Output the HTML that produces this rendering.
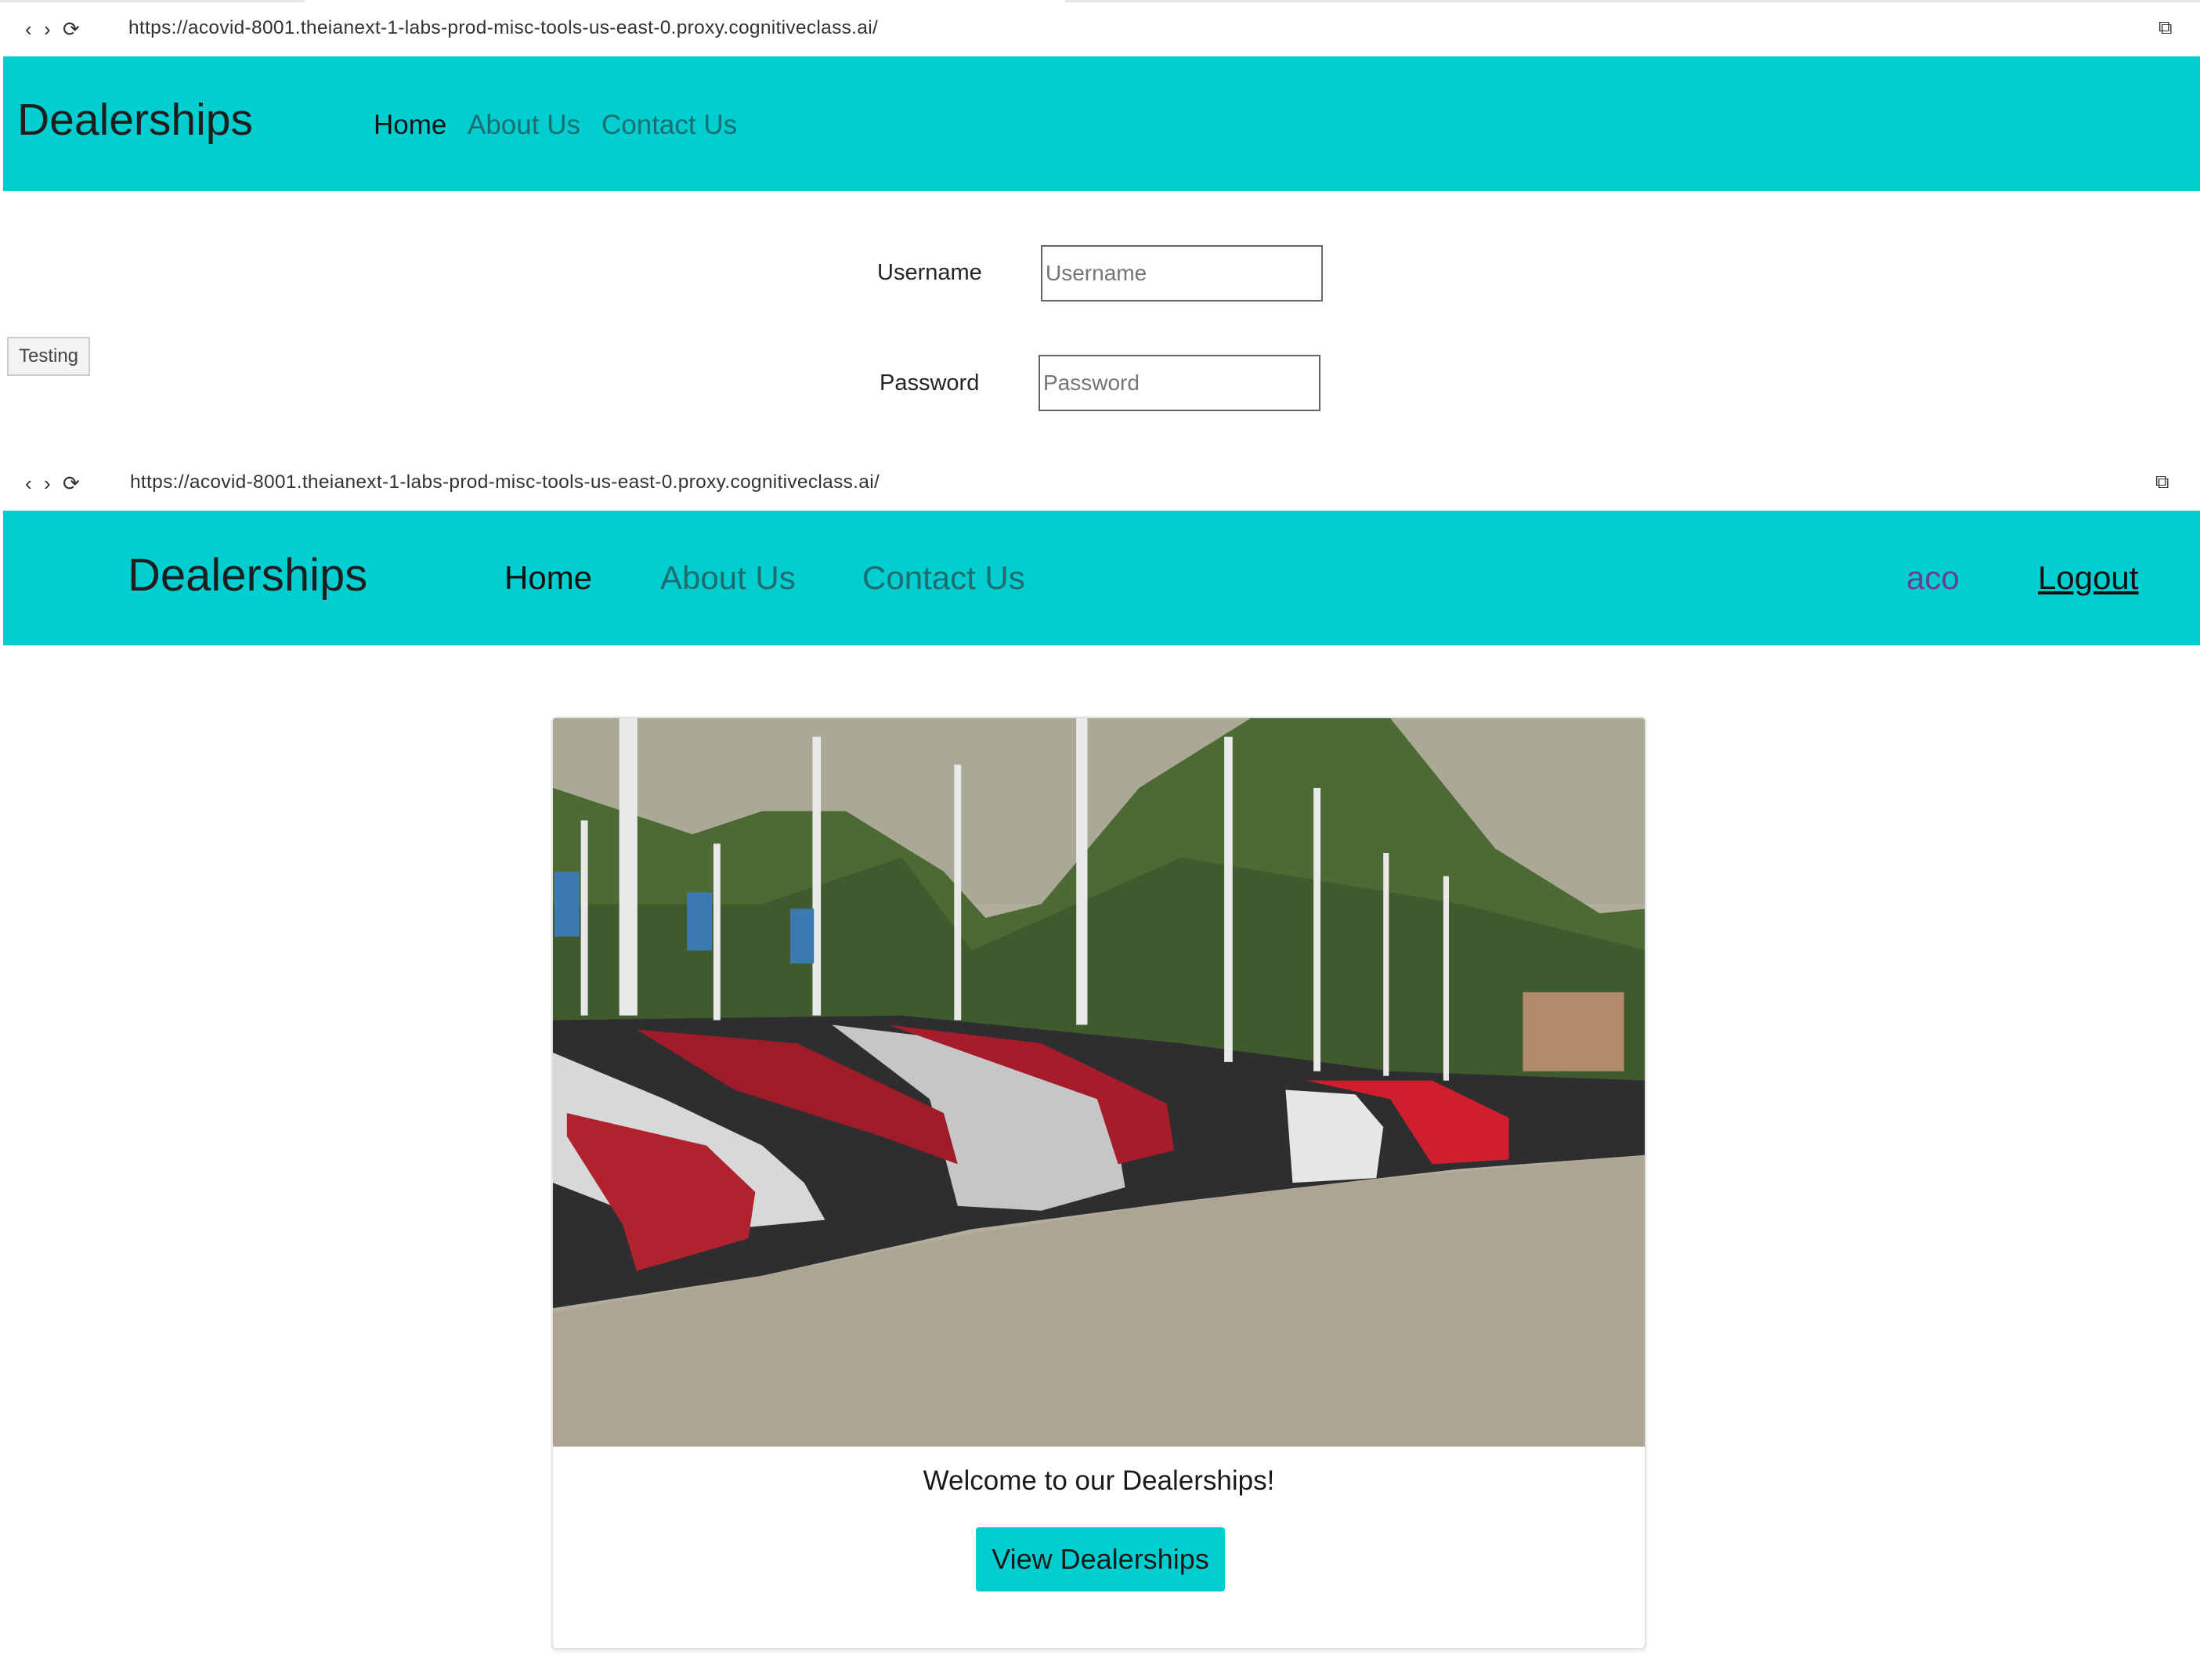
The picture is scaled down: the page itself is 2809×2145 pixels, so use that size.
<!DOCTYPE html>
<html><head><meta charset="utf-8"><style>
*{margin:0;padding:0;box-sizing:border-box}
body{width:2809px;height:2145px;background:#fff;position:relative;overflow:hidden;font-family:"Liberation Sans",sans-serif;color:#212529}
.a{position:absolute;white-space:nowrap}
.url{font-size:24.5px;color:#333;letter-spacing:0.3px}
.nav{position:absolute;left:4px;width:2805px;background:#00ced1}
.lk{color:#1d6d6f}
input{position:absolute;border:2px solid #666;font-family:"Liberation Sans",sans-serif;font-size:28px;padding:0 4px;color:#777;background:#fff}
</style></head><body>
<div class="a" style="left:0;top:0;width:390px;height:3px;background:#e8e8e8"></div>
<div class="a" style="left:1360px;top:0;width:1449px;height:3px;background:#e8e8e8"></div>
<div class="a url" style="left:32px;top:22px;font-size:26px">‹ &nbsp;› &nbsp;⟳</div>
<div class="a url" style="left:164px;top:22px">https://acovid-8001.theianext-1-labs-prod-misc-tools-us-east-0.proxy.cognitiveclass.ai/</div>
<div class="a url" style="left:2756px;top:22px">⧉</div>
<div class="nav" style="top:72px;height:172px"></div>
<div class="a" style="left:22px;top:120px;font-size:57px;color:#1e1e1e">Dealerships</div>
<div class="a" style="left:477px;top:140px;font-size:35px;color:#111">Home</div>
<div class="a lk" style="left:597px;top:140px;font-size:35px">About Us</div>
<div class="a lk" style="left:768px;top:140px;font-size:35px">Contact Us</div>
<div class="a" style="left:1120px;top:332px;font-size:29px">Username</div>
<input style="left:1329px;top:313px;width:360px;height:72px" placeholder="Username">
<div class="a" style="left:1123px;top:473px;font-size:29px">Password</div>
<input style="left:1326px;top:453px;width:360px;height:72px" placeholder="Password">
<div class="a" style="left:9px;top:430px;width:106px;height:50px;background:#f3f3f3;border:2px solid #ccc;font-size:24px;color:#444;text-align:center;line-height:46px">Testing</div>
<div class="a url" style="left:32px;top:602px;font-size:26px">‹ &nbsp;› &nbsp;⟳</div>
<div class="a url" style="left:166px;top:602px">https://acovid-8001.theianext-1-labs-prod-misc-tools-us-east-0.proxy.cognitiveclass.ai/</div>
<div class="a url" style="left:2752px;top:602px">⧉</div>
<div class="nav" style="top:652px;height:172px"></div>
<div class="a" style="left:163px;top:701px;font-size:58px;color:#1e1e1e">Dealerships</div>
<div class="a" style="left:644px;top:714px;font-size:42px;color:#111">Home</div>
<div class="a lk" style="left:843px;top:714px;font-size:42px">About Us</div>
<div class="a lk" style="left:1101px;top:714px;font-size:42px">Contact Us</div>
<div class="a" style="left:2434px;top:714px;font-size:42px;color:#6a3f8f">aco</div>
<div class="a" style="left:2602px;top:714px;font-size:42px;color:#111;text-decoration:underline">Logout</div>
<div class="a" style="left:704px;top:915px;width:1398px;height:1191px;border:2px solid #e2e2e2;border-radius:6px;overflow:hidden;box-shadow:0 3px 4px rgba(0,0,0,.08)">
<svg width="1397" height="930" viewBox="0 0 1568 1568" preserveAspectRatio="none" style="display:block">
<rect width="1568" height="1568" fill="#b3ad9c"/>
<rect width="1568" height="400" fill="#a9a996"/>
<path d="M0 150 L200 250 L300 200 L420 200 L560 330 L620 430 L700 400 L840 150 L1000 0 L1200 0 L1350 280 L1500 420 L1568 410 L1568 800 L0 800Z" fill="#4e6a34"/>
<path d="M0 400 L300 400 L500 300 L600 500 L900 300 L1300 400 L1568 500 L1568 800 L0 800Z" fill="#3f5a2c"/>
<path d="M1390 590 L1535 590 L1535 760 L1390 760Z" fill="#b08a6a"/>
<path d="M0 650 L500 640 L900 700 L1200 760 L1568 780 L1568 940 L1300 970 L900 1040 L600 1100 L300 1200 L0 1270Z" fill="#2e2e30"/>
<path d="M0 720 L160 820 L300 920 L360 1000 L390 1080 L250 1100 L120 1070 L0 1000Z" fill="#d8d8d8"/>
<path d="M20 850 L220 920 L290 1020 L280 1120 L120 1190 L100 1090 L20 900Z" fill="#b0222e"/>
<path d="M400 660 L620 700 L800 830 L820 1010 L700 1060 L580 1050 L540 820Z" fill="#c6c6c6"/>
<path d="M120 670 L350 700 L560 850 L580 960 L470 900 L260 800Z" fill="#9e1c28"/>
<path d="M480 660 L700 700 L880 830 L890 930 L810 960 L780 820Z" fill="#a71c2a"/>
<path d="M1080 780 L1260 780 L1370 860 L1370 950 L1260 960 L1200 820Z" fill="#d01e2e"/>
<path d="M1050 800 L1150 810 L1190 880 L1180 990 L1060 1000Z" fill="#e6e6e6"/>
<path d="M0 1280 L300 1200 L600 1110 L900 1040 L1200 990 L1568 940 L1568 1568 L0 1568Z" fill="#aea493"/>
<g fill="#e9e9e9"><rect x="95" y="0" width="26" height="640"/><rect x="750" y="0" width="16" height="660"/><rect x="962" y="40" width="12" height="700"/><rect x="1090" y="150" width="10" height="610"/><rect x="1190" y="290" width="8" height="480"/><rect x="1276" y="340" width="8" height="440"/><rect x="575" y="100" width="10" height="550"/><rect x="372" y="40" width="12" height="600"/><rect x="230" y="270" width="10" height="380"/><rect x="40" y="220" width="10" height="420"/></g>
<g fill="#3b7ab0"><rect x="2" y="330" width="36" height="140"/><rect x="192" y="375" width="36" height="125"/><rect x="340" y="410" width="34" height="118"/></g>
</svg>
<div style="text-align:center;font-size:35px;color:#1a1a1a;margin-top:24px">Welcome to our Dealerships!</div>
<div style="position:absolute;left:540px;top:1033px;width:318px;height:82px;background:#00ced1;border-radius:4px;font-size:36px;color:#1a1a1a;text-align:center;line-height:82px">View Dealerships</div>
</div>
</body></html>
